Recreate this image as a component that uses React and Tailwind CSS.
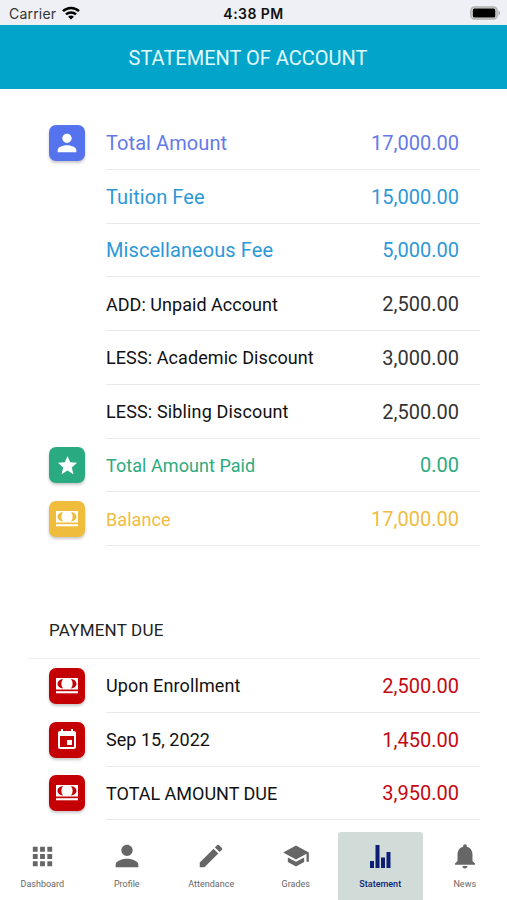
import React, { useState } from "react";
import {
  MdApps,
  MdEvent,
  MdNotifications,
  MdPerson,
  MdSchool,
  MdStar,
} from "react-icons/md";

function CashIcon() {
  return (
    <svg viewBox="0 0 22 16" className="w-[22px] h-4" fill="white">
      <path
        fillRule="evenodd"
        d="M0 0h22v11.6H0zM7 1C4 1.400 1.500 3.300 1.500 5.800S4 10.200 7 10.600C4.800 7.500 4.800 4.100 7 1zM15 1c2.200 3.100 2.200 6.500 0 9.600 3-.4 5.500-2.300 5.500-4.800S18 1.400 15 1z"
      />
      <path d="M0 13.200h22v2.100H0z" />
    </svg>
  );
}

function PencilIcon() {
  return (
    <svg viewBox="0 0 24 24" className="size-[30px]" fill="currentColor">
      <path d="M3 17.250V21h3.750L17.810 9.940l-3.750-3.750zM20.710 7.040a1 1 0 0 0 0-1.410l-2.340-2.340a1 1 0 0 0-1.410 0l-1.830 1.830 3.750 3.750z" />
    </svg>
  );
}

function BarsIcon() {
  return (
    <svg viewBox="0 0 21 23" className="w-[21px] h-[23px]" fill="currentColor">
      <path d="M0 16h4v7H0zM5.500 0h4v23h-4zM11 12.500h4V23h-4zM16.500 7h4v16h-4z" />
    </svg>
  );
}

function StatusBar() {
  return (
    <div className="h-[25px] shrink-0 bg-[#eff0f5] grid grid-cols-3 items-center pl-[9px] pr-[6px] pt-[2px] font-[Inter] text-[#111]">
      <div className="flex items-center gap-[6px]">
        <span className="text-[14px] tracking-[0.200px] text-[#333]">Carrier</span>
        <svg viewBox="0 0 18 14" className="w-[18px] h-[14px] mb-px" fill="none" stroke="black" strokeWidth="2.500">
          <path d="M1 5.200C5.500.8 12.500.8 17 5.200M4 8.400c2.800-2.700 7.200-2.700 10 0" />
          <path d="M9 13.500 6.100 10.700c1.600-1.500 4.200-1.500 5.800 0z" fill="black" stroke="none" />
        </svg>
      </div>
      <span className="text-center text-[14px] tracking-[0.450px] font-semibold whitespace-nowrap pr-[3px]">
        4:38 PM
      </span>
      <svg viewBox="0 0 31 14" className="w-[31px] h-[14px] justify-self-end mb-[2px]">
        <rect x=".9" y=".9" width="26.200" height="12.200" rx="3.500" fill="#ddd" stroke="#b0b0b0" strokeWidth="1.500" />
        <rect x="2.800" y="2.500" width="22.500" height="9" rx="1.500" fill="black" />
        <path d="M28.500 4.500c2 .7 2 4.300 0 5z" fill="#aaa" />
      </svg>
    </div>
  );
}

const fees = [
  { label: "Total Amount", amount: "17,000.00", color: "text-[#6479e8]", size: "text-[20px] tracking-[0.080px]", icon: <MdPerson size={28} />, tile: "bg-[#5573ec]" },
  { label: "Tuition Fee", amount: "15,000.00", color: "text-[#2d98d6]", size: "text-[20px] tracking-[0.080px]" },
  { label: "Miscellaneous Fee", amount: "5,000.00", color: "text-[#2d98d6]", size: "text-[20px] tracking-[0.080px]" },
  { label: "ADD: Unpaid Account", amount: "2,500.00", color: "text-[#111]", amountColor: "text-[#333]", size: "text-[18px] tracking-[0.030px]" },
  { label: "LESS: Academic Discount", amount: "3,000.00", color: "text-[#111]", amountColor: "text-[#333]", size: "text-[18px] tracking-[0.090px]" },
  { label: "LESS: Sibling Discount", amount: "2,500.00", color: "text-[#111]", amountColor: "text-[#333]", size: "text-[18px] tracking-[0.140px]" },
  { label: "Total Amount Paid", amount: "0.00", color: "text-[#2bab7f]", size: "text-[18px] tracking-[0.060px]", icon: <MdStar size={23} />, tile: "bg-[#2aaa80]" },
  { label: "Balance", amount: "17,000.00", color: "text-[#efbd3f]", size: "text-[18px] tracking-[0.060px]", icon: <CashIcon />, tile: "bg-[#efbc3b]" },
];

const dues = [
  { label: "Upon Enrollment", amount: "2,500.00", icon: <CashIcon />, size: "text-[18px] tracking-[0.120px]" },
  { label: "Sep 15, 2022", amount: "1,450.00", icon: <MdEvent size={24} />, size: "text-[18px] tracking-[0.040px]" },
  { label: "TOTAL AMOUNT DUE", amount: "3,950.00", icon: <CashIcon />, size: "text-[18px]" },
];

const tabs = [
  { name: "Dashboard", icon: <MdApps size={29} /> },
  { name: "Profile", icon: <MdPerson size={34} /> },
  { name: "Attendance", icon: <PencilIcon /> },
  { name: "Grades", icon: <MdSchool size={28} /> },
  { name: "Statement", icon: <BarsIcon /> },
  { name: "News", icon: <MdNotifications size={30} /> },
];

function Row({ label, amount, color, amountColor, size, icon, tile }) {
  return (
    <div className="h-[53.750px] flex pl-[49px] pr-[27px]">
      <div className="w-[57px] shrink-0 flex items-center">
        {icon && (
          <div className={`size-9 rounded-[7px] flex items-center justify-center text-white shadow-[0_2px_3px_rgba(0,0,0,0.220)] ${tile}`}>
            {icon}
          </div>
        )}
      </div>
      <div className={`flex-1 flex items-center justify-between pt-px pr-[21px] border-b border-[#e9e9eb] whitespace-nowrap ${color}`}>
        <span className={size}>{label}</span>
        <span className={`text-[20px] ${amountColor || ""}`}>{amount}</span>
      </div>
    </div>
  );
}

function App() {
  const [active, setActive] = useState("Statement");

  return (
    <div className="w-full h-[900px] flex flex-col overflow-hidden bg-white font-[Roboto,sans-serif]">
      <StatusBar />
      <header className="h-[63.500px] shrink-0 bg-[#03a4ca] flex items-center justify-center">
        <h1 className="text-[20px] text-[#e2fbff] pr-[11px] pt-[2px]">STATEMENT OF ACCOUNT</h1>
      </header>

      <main className="flex-1 pt-[27.500px]">
        {fees.map((fee) => (
          <Row key={fee.label} {...fee} />
        ))}

        <div className="h-[113px] ml-7 mr-[27px] pl-[21px] pb-[15px] flex items-end border-b border-[#eeeef0] text-[17px] tracking-[0.200px] text-[#222]">
          PAYMENT DUE
        </div>
        {dues.map((due) => (
          <Row
            key={due.label}
            {...due}
            color="text-[#111]"
            amountColor="text-[#c40812]"
            tile="bg-[#c40004]"
          />
        ))}
      </main>

      <nav className="h-[68px] shrink-0 grid grid-cols-6">
        {tabs.map((tab) => (
          <button
            key={tab.name}
            onClick={() => setActive(tab.name)}
            className={`flex flex-col items-center rounded-t-[3px] pt-1.5 text-[9px] ${
              active === tab.name
                ? "bg-[#d1dcd9] text-[#0f1e75] font-medium"
                : "text-[#666]"
            }`}
          >
            <span className="h-9 flex items-center justify-center">{tab.icon}</span>
            <span className="mt-[4px]">{tab.name}</span>
          </button>
        ))}
      </nav>
    </div>
  );
}

export default App;
